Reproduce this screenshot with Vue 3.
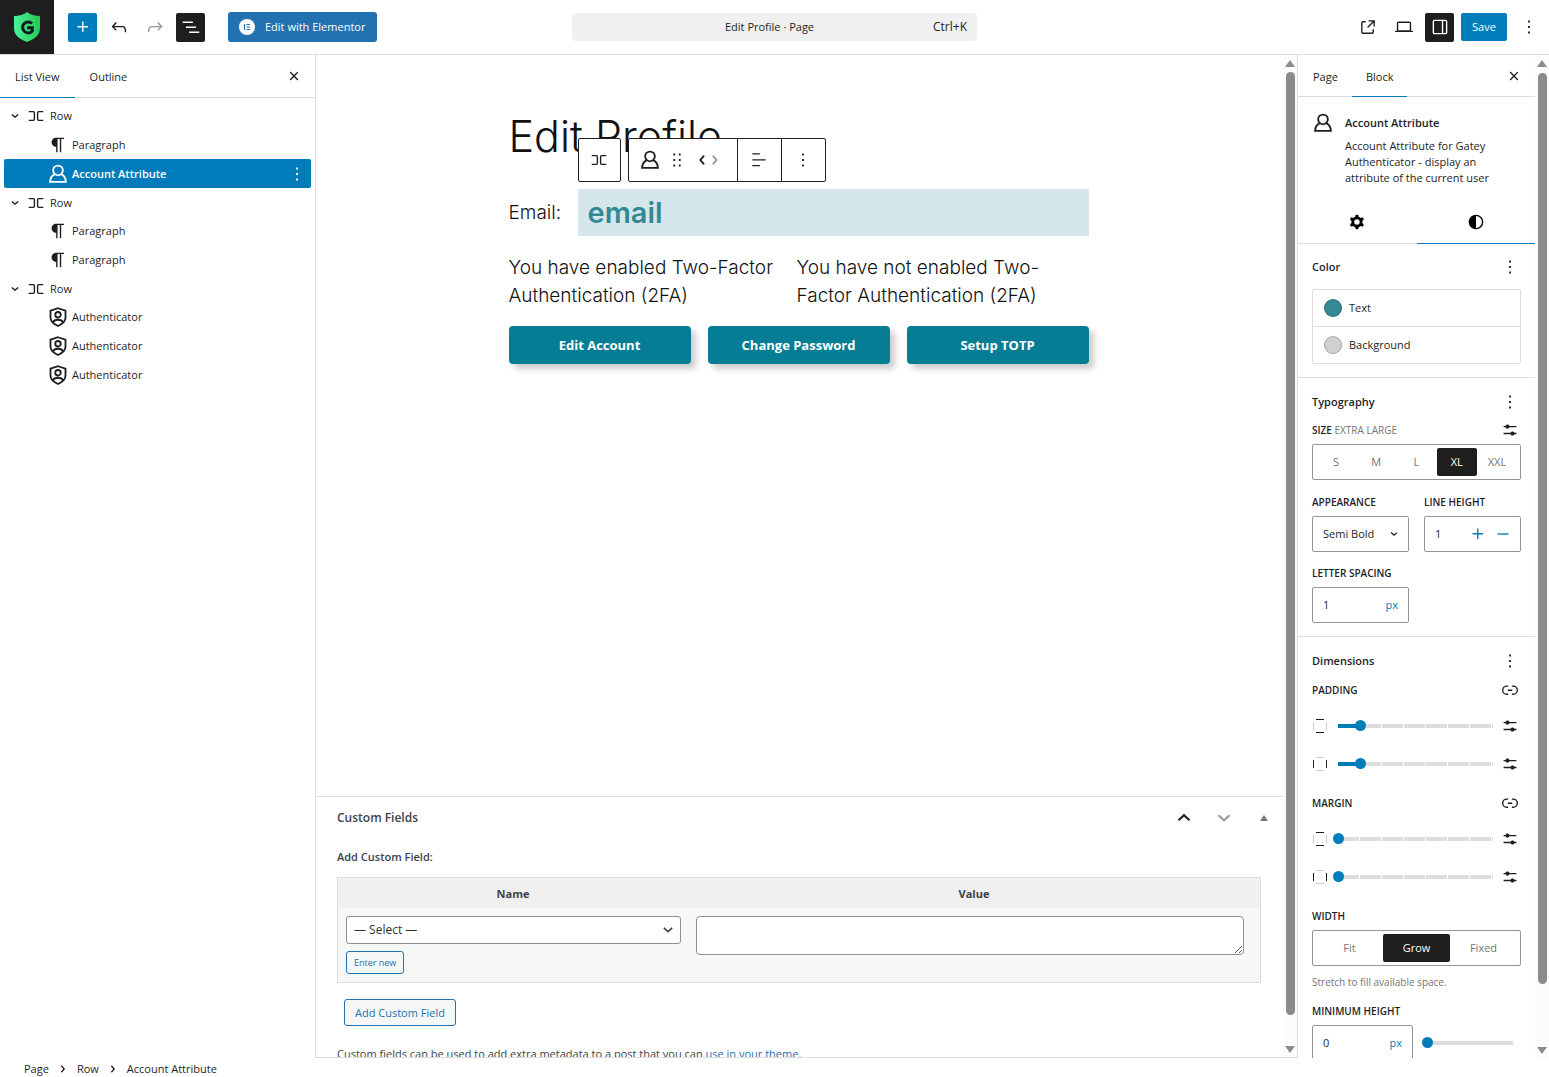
<script setup>
import { h, ref } from 'vue'

const paths = {
  plus: 'M11 12.5V17.5H12.5V12.5H17.5V11H12.5V6H11V11H6V12.5H11Z',
  undo: 'M18.3 11.7c-.6-.6-1.4-.9-2.3-.9H6.7l2.9-3.3-1.1-1-4.5 5L8.5 16l1-1-2.7-2.7H16c.5 0 .9.2 1.3.5 1 1 1 3.4 1 4.5v.3h1.5v-.2c0-1.5 0-4.3-1.5-5.7z',
  redo: 'M15.6 6.5l-1.1 1 2.9 3.3H8c-.9 0-1.7.3-2.3.9-1.4 1.5-1.4 4.2-1.4 5.6v.2h1.5v-.3c0-1.1 0-3.5 1-4.5.3-.3.7-.5 1.3-.5h9.2L14.5 15l1.1 1.1 4.6-4.6-4.6-5z',
  listView: 'M3 6h11v1.5H3V6Zm3.5 5.5h11V13h-11v-1.5ZM21 17H10v1.5h11V17Z',
  external: 'M19.5 4.5h-7V6h4.44l-5.97 5.97 1.06 1.06L18 7.06v4.44h1.5v-7Zm-13 1a2 2 0 0 0-2 2v10a2 2 0 0 0 2 2h10a2 2 0 0 0 2-2v-3H17v3a.5.5 0 0 1-.5.5h-10a.5.5 0 0 1-.5-.5v-10a.5.5 0 0 1 .5-.5h3V5.5h-3Z',
  desktop: 'M20.5 16h-.7V8c0-1.1-.9-2-2-2H6.2c-1.1 0-2 .9-2 2v8h-.7c-.8 0-1.5.7-1.5 1.5h20c0-.8-.7-1.5-1.5-1.5zM5.7 8c0-.3.2-.5.5-.5h11.6c.3 0 .5.2.5.5v7.6H5.7V8z',
  drawer: 'M18 4H6c-1.1 0-2 .9-2 2v12c0 1.1.9 2 2 2h12c1.1 0 2-.9 2-2V6c0-1.1-.9-2-2-2zm-4 14.500H6c-.3 0-.5-.2-.5-.5V6c0-.3.2-.5.5-.5h8v13zm4.500-.5c0 .3-.2.5-.5.5h-2.500v-13H18c.3 0 .5.2.5.5v12z',
  more: 'M13 19h-2v-2h2v2zm0-6h-2v-2h2v2zm0-6h-2V5h2v2z',
  close: 'M12 13.060l3.712 3.713 1.061-1.060L13.061 12l3.712-3.712-1.060-1.060L12 10.938 8.288 7.227l-1.061 1.060L10.939 12l-3.712 3.712 1.060 1.061L12 13.061z',
  chevron: 'm15.990 10.889-3.988 3.418-3.988-3.418.976-1.140 3.012 2.582 3.012-2.581.976 1.139Z',
  left: 'M13.100 16l-3.400-4 3.400-4 1.100 1-2.600 3 2.600 3-1.100 1z',
  right: 'M10.800 8l3.400 4-3.400 4-1.100-1 2.600-3-2.600-3 1.100-1z',
  row: 'M4 6.500h5a2 2 0 0 1 2 2v7a2 2 0 0 1-2 2H4V16h5a.5.5 0 0 0 .5-.5v-7A.5.5 0 0 0 9 8H4V6.500Zm16 0h-5a2 2 0 0 0-2 2v7a2 2 0 0 0 2 2h5V16h-5a.5.5 0 0 1-.5-.5v-7A.5.5 0 0 1 15 8h5V6.500Z',
  paragraph: 'm9.996 14v-.225h.004v6.225h1.500v-14.500h2.500v14.500h1.500v-14.500h3v-1.500h-8.504c-2.761 0-5 2.239-5 5 0 2.761 2.239 5 5 5z',
  sliders: 'm19 7.500h-7.628c-.309-.874-1.142-1.500-2.122-1.500-.980 0-1.813.626-2.122 1.500H5v1.500h2.128c.309.874 1.142 1.500 2.122 1.500.980 0 1.813-.626 2.122-1.500H19zm0 7.500h-2.128c-.309-.874-1.142-1.500-2.122-1.500s-1.813.626-2.122 1.500H5v1.500h7.628c.309.874 1.142 1.500 2.122 1.500s1.813-.626 2.122-1.500H19z',
  cog: 'M10.289 4.836A1 1 0 0111.275 4h1.306a1 1 0 01.987.836l.244 1.466c.787.26 1.503.679 2.108 1.218l1.393-.522a1 1 0 011.216.437l.653 1.130a1 1 0 01-.23 1.273l-1.148.944a6.025 6.025 0 010 2.435l1.149.946a1 1 0 01.23 1.272l-.653 1.130a1 1 0 01-1.216.437l-1.394-.522c-.605.54-1.320.958-2.108 1.218l-.244 1.466a1 1 0 01-.987.836h-1.306a1 1 0 01-.986-.836l-.244-1.466a5.995 5.995 0 01-2.108-1.218l-1.394.522a1 1 0 01-1.217-.436l-.653-1.131a1 1 0 01.23-1.272l1.149-.946a6.026 6.026 0 010-2.435l-1.148-.944a1 1 0 01-.23-1.272l.653-1.131a1 1 0 011.217-.437l1.393.522a5.994 5.994 0 012.108-1.218l.244-1.466zM14.929 12a3 3 0 11-6 0 3 3 0 016 0z',
  styles: 'M20 12a8 8 0 1 1-16 0 8 8 0 0 1 16 0Zm-1.500 0a6.500 6.500 0 0 1-6.500 6.500v-13a6.500 6.500 0 0 1 6.500 6.500Z',
  link: 'M10 17.389H8.444A5.194 5.194 0 1 1 8.444 7H10v1.500H8.444a3.694 3.694 0 0 0 0 7.389H10v1.500ZM14 7h1.556a5.194 5.194 0 0 1 0 10.390H14v-1.500h1.556a3.694 3.694 0 0 0 0-7.390H14V7Zm-4.500 6h5v-1.500h-5V13Z',
  drag: 'M8 7h2V5H8v2zm0 6h2v-2H8v2zm0 6h2v-2H8v2zm6-14v2h2V5h-2zm0 8h2v-2h-2v2zm0 6h2v-2h-2v2z',
  align: 'M13 5.500H4V4h9v1.500Zm7 7H4V11h16v1.500Zm-7 7H4V18h9v1.500Z',
  minus: 'M6 11.250h12v1.500H6z',
}
const outlines = {
  user: 'M8.500 12.200C6.800 11 6.200 9.300 6.200 7.700a5.800 5.800 0 0 1 11.600 0c0 1.600-.6 3.300-2.300 4.500M8.500 12.200c2 1.700 5 1.700 7 0M8.500 12.200C5 13.500 2.800 16.500 2.500 21.500h19c-.3-5-2.500-8-6-9.300',
  shield: 'M12 1.500 21 4.500V13c0 4.500-4 7.500-9 9.800C7 20.500 3 17.500 3 13V4.500ZM15.300 9.300a3.300 3.300 0 1 1-6.600 0 3.300 3.300 0 0 1 6.600 0ZM6 18.500c1-2.300 3.400-3.200 6-3.200s5 .9 6 3.200',
  up: 'M6.500 14.200 12 9.200l5.500 5',
  down: 'M6.500 9.300 12 14.300l5.500-5',
}
const Icon = ({ name, size = 22 }) =>
  h('svg', { width: size, height: size, viewBox: '0 0 24 24', 'aria-hidden': 'true', style: { flex: 'none', display: 'block' } }, [
    outlines[name]
      ? h('path', { d: outlines[name], fill: 'none', stroke: 'currentColor', 'stroke-width': 2.2 })
      : h('path', { d: paths[name], fill: 'currentColor', 'fill-rule': 'evenodd' }),
  ])
Icon.props = ['name', 'size']

const blocks = [
  { label: 'Row', icon: 'row', parent: true },
  { label: 'Paragraph', icon: 'paragraph' },
  { label: 'Account Attribute', icon: 'user', selected: true },
  { label: 'Row', icon: 'row', parent: true },
  { label: 'Paragraph', icon: 'paragraph' },
  { label: 'Paragraph', icon: 'paragraph' },
  { label: 'Row', icon: 'row', parent: true },
  { label: 'Authenticator', icon: 'shield' },
  { label: 'Authenticator', icon: 'shield' },
  { label: 'Authenticator', icon: 'shield' },
]
const sizes = ['S', 'M', 'L', 'XL', 'XXL']
const widths = ['Fit', 'Grow', 'Fixed']
const spacing = [
  { title: 'Padding', sides: [{ axis: 'vertical', value: 1 }, { axis: 'horizontal', value: 1 }] },
  { title: 'Margin', sides: [{ axis: 'vertical', value: 0 }, { axis: 'horizontal', value: 0 }] },
]
const size = ref('XL')
const width = ref('Grow')
</script>

<template>
  <div class="editor">
    <header class="topbar">
      <div class="top-left">
        <a href="#" class="site-logo" aria-label="Dashboard">
          <svg width="26" height="30" viewBox="0 0 26 30" aria-hidden="true">
            <defs>
              <linearGradient id="shieldFill" x1="0" x2="1"><stop offset="0" stop-color="#47f39b" /><stop offset="1" stop-color="#28c850" /></linearGradient>
            </defs>
            <path d="M13 0c3 2.500 8 4 13 4v12c0 7-5 11-13 14C5 27 0 23 0 16V4c5 0 10-1.500 13-4Z" fill="url(#shieldFill)" />
            <path d="M18 11.500a5.500 5.500 0 1 0 .3 7.500v-3.200H13" fill="none" stroke="#111b22" stroke-width="3" />
          </svg>
        </a>
        <div class="tools">
          <button class="tool primary" aria-label="Add block"><Icon name="plus" /></button>
          <button class="tool" aria-label="Undo"><Icon name="undo" /></button>
          <button class="tool faded" aria-label="Redo"><Icon name="redo" /></button>
          <button class="tool dark" aria-label="Document overview"><Icon name="listView" /></button>
        </div>
        <button class="elementor">
          <svg width="16" height="16" viewBox="0 0 16 16" aria-hidden="true">
            <circle cx="8" cy="8" r="8" fill="#fff" />
            <path d="M5.500 5v6M7.500 5.500H11M7.500 8H11M7.500 10.500H11" stroke="#2271b1" stroke-width="1.200" />
          </svg>
          Edit with Elementor
        </button>
      </div>
      <button class="command">
        <span class="doc">Edit Profile · Page</span>
        <span class="shortcut">Ctrl+K</span>
      </button>
      <div class="top-right">
        <button class="tool" aria-label="View page"><Icon name="external" /></button>
        <button class="tool" aria-label="Preview"><Icon name="desktop" /></button>
        <button class="tool dark" aria-label="Settings"><Icon name="drawer" /></button>
        <button class="save">Save</button>
        <button class="tool" aria-label="Options"><Icon name="more" /></button>
      </div>
    </header>

    <main class="body">
      <aside class="list-panel">
        <div class="tabs">
          <button class="tab active">List View</button>
          <button class="tab">Outline</button>
          <button class="tab-close" aria-label="Close"><Icon name="close" /></button>
        </div>
        <ul class="tree">
          <li v-for="(b, i) in blocks" :key="i" :class="{ child: !b.parent, selected: b.selected }">
            <Icon v-if="b.parent" name="chevron" />
            <a href="#"><Icon :name="b.icon" :size="b.icon === 'user' || b.icon === 'shield' ? 20 : 22" /><span>{{ b.label }}</span></a>
            <button v-if="b.selected" class="tool" aria-label="Options"><Icon name="more" /></button>
          </li>
        </ul>
      </aside>

      <section class="center">
        <div class="scroll-area">
          <div class="canvas">
            <div class="page">
              <h1>Edit Profile</h1>
              <div class="email-row">
                <p>Email:</p>
                <div class="attribute">email
                  <div class="block-toolbar">
                    <button class="parent-block" aria-label="Select parent block"><Icon name="row" /></button>
                    <div class="group">
                      <div class="segment movers">
                        <button aria-label="Account Attribute"><Icon name="user" :size="20" /></button>
                        <button aria-label="Drag"><Icon name="drag" /></button>
                        <span class="arrows">
                          <button aria-label="Move left"><Icon name="left" :size="30" /></button>
                          <button class="faded" aria-label="Move right"><Icon name="right" :size="30" /></button>
                        </span>
                      </div>
                      <div class="segment"><button aria-label="Align"><Icon name="align" :size="20" /></button></div>
                      <div class="segment"><button aria-label="Options"><Icon name="more" /></button></div>
                    </div>
                  </div>
                </div>
              </div>
              <div class="status">
                <p>You have enabled Two-Factor Authentication (2FA)</p>
                <p>You have not enabled Two-Factor Authentication (2FA)</p>
              </div>
              <div class="actions">
                <button>Edit Account</button>
                <button>Change Password</button>
                <button>Setup TOTP</button>
              </div>
            </div>
          </div>
          <div class="metabox">
            <div class="meta-head">
              <h2>Custom Fields</h2>
              <button aria-label="Move up"><Icon name="up" :size="24" /></button>
              <button class="faded" aria-label="Move down"><Icon name="down" :size="24" /></button>
              <button class="toggle" aria-label="Toggle panel"><svg width="8" height="6" viewBox="0 0 8 6"><path d="M4 0l4 6H0z" fill="#787c82" /></svg></button>
            </div>
            <p class="meta-title">Add Custom Field:</p>
            <table>
              <thead>
                <tr><th class="name-col"><label for="meta-key">Name</label></th><th><label for="meta-value">Value</label></th></tr>
              </thead>
              <tbody>
                <tr>
                  <td>
                    <div class="select-wrap">
                      <select id="meta-key"><option>— Select —</option></select>
                      <Icon name="down" :size="18" />
                    </div>
                    <button class="outline small">Enter new</button>
                  </td>
                  <td class="value-col"><textarea id="meta-value"></textarea></td>
                </tr>
              </tbody>
            </table>
            <button class="outline add">Add Custom Field</button>
            <p class="help">Custom fields can be used to add extra metadata to a post that you can <a href="#">use in your theme</a>.</p>
          </div>
        </div>
        <div class="scrollbar"><i class="arrow-up"></i><i class="thumb"></i><i class="arrow-down"></i></div>
      </section>

      <aside class="settings">
        <div class="settings-body">
          <div class="tabs">
            <button class="tab">Page</button>
            <button class="tab active">Block</button>
            <button class="tab-close" aria-label="Close"><Icon name="close" /></button>
          </div>
          <div class="card">
            <Icon name="user" :size="20" />
            <div>
              <h2>Account Attribute</h2>
              <p>Account Attribute for Gatey Authenticator - display an attribute of the current user</p>
            </div>
          </div>
          <div class="subtabs">
            <button aria-label="Settings"><Icon name="cog" /></button>
            <button class="active" aria-label="Styles"><Icon name="styles" /></button>
          </div>

          <section class="panel color">
            <div class="panel-head"><h3>Color</h3><button aria-label="Color options"><Icon name="more" /></button></div>
            <div class="swatches">
              <button><i class="dot teal"></i>Text</button>
              <button><i class="dot gray"></i>Background</button>
            </div>
          </section>

          <section class="panel typography">
            <div class="panel-head"><h3>Typography</h3><button aria-label="Typography options"><Icon name="more" /></button></div>
            <div class="label-row"><span class="label">Size <em>Extra Large</em></span><button aria-label="Set custom size"><Icon name="sliders" /></button></div>
            <div class="segmented five">
              <button v-for="s in sizes" :key="s" :class="{ on: s === size }" @click="size = s">{{ s }}</button>
            </div>
            <div class="fields">
              <div>
                <label class="label" for="appearance">Appearance</label>
                <div class="box">
                  <select id="appearance"><option>Semi Bold</option></select>
                  <Icon name="chevron" :size="20" />
                </div>
              </div>
              <div>
                <label class="label" for="line-height">Line height</label>
                <div class="box stepper">
                  <input id="line-height" type="text" value="1" />
                  <button aria-label="Increment"><Icon name="plus" /></button>
                  <button aria-label="Decrement"><Icon name="minus" /></button>
                </div>
              </div>
              <div>
                <label class="label" for="letter-spacing">Letter spacing</label>
                <div class="box"><input id="letter-spacing" type="text" value="1" /><span class="unit">px</span></div>
              </div>
            </div>
          </section>

          <section class="panel dimensions">
            <div class="panel-head"><h3>Dimensions</h3><button aria-label="Dimensions options"><Icon name="more" /></button></div>
            <div v-for="group in spacing" :key="group.title" class="spacing">
              <div class="label-row"><span class="label">{{ group.title }}</span><button aria-label="Unlink sides"><Icon name="link" /></button></div>
              <div v-for="side in group.sides" :key="side.axis" class="slider-row">
                <i :class="['sides', side.axis]"></i>
                <input class="steps" type="range" min="0" max="7" :value="side.value" :aria-label="group.title + ' ' + side.axis" :style="{ '--fill': (side.value / 7) * 100 + '%' }" />
                <button aria-label="Set custom size"><Icon name="sliders" /></button>
              </div>
            </div>
            <span class="label width-label">Width</span>
            <div class="segmented">
              <button v-for="w in widths" :key="w" :class="{ on: w === width }" @click="width = w">{{ w }}</button>
            </div>
            <p class="hint">Stretch to fill available space.</p>
            <label class="label" for="min-height">Minimum height</label>
            <div class="min-height">
              <div class="box"><input id="min-height" type="text" value="0" /><span class="unit">px</span></div>
              <input type="range" min="0" max="100" value="0" aria-label="Minimum height" />
            </div>
          </section>
        </div>
        <div class="scrollbar wide"><i class="arrow-up"></i><i class="thumb"></i><i class="arrow-down"></i></div>
      </aside>
    </main>

    <footer class="breadcrumb">
      <a href="#">Page</a><Icon name="right" /><a href="#">Row</a><Icon name="right" /><span>Account Attribute</span>
    </footer>
  </div>
</template>

<style>
body { margin: 0; background: #fff; }
</style>

<style scoped>
* { box-sizing: border-box; }
.editor {
  height: 100vh;
  display: flex;
  flex-direction: column;
  overflow: hidden;
  color: #1e1e1e;
  font: 11px/16px "Open Sans", "Noto Sans", sans-serif;
}
button, input, select, textarea { font: inherit; color: inherit; margin: 0; padding: 0; border: 0; background: none; }
button { display: inline-flex; align-items: center; justify-content: center; cursor: pointer; }
h1, h2, h3, p, ul { margin: 0; padding: 0; }
ul { list-style: none; }
a { color: inherit; text-decoration: none; }
.faded { opacity: .45; }

.topbar { flex: none; height: 55px; display: grid; grid-template-columns: 1fr 405px 1fr; align-items: center; border-bottom: 1px solid #ddd; }
.top-left, .top-right, .tools { display: flex; align-items: center; }
.site-logo { width: 54px; height: 54px; background: #1e1e1e; display: flex; align-items: center; justify-content: center; }
.tools { gap: 7px; margin: 0 23px 0 14px; }
.tool { width: 29px; height: 29px; border-radius: 2px; }
.primary, .save { background: #007cba; color: #fff; }
.dark { background: #1e1e1e; color: #fff; }
.elementor { height: 30px; padding: 0 12px 0 11px; gap: 10px; background: #2271b1; color: #fff; border-radius: 3px; }
.command { height: 28px; padding: 0 10px; background: #f0f0f0; border-radius: 4px; }
.doc { flex: 1; padding-left: 24px; }
.shortcut { font-size: 12px; }
.top-right { justify-content: flex-end; gap: 7px; padding-right: 6px; }
.save { width: 46px; height: 28px; border-radius: 2px; }

.body { flex: 1; min-height: 0; display: grid; grid-template-columns: 316px minmax(0, 1fr) 252px; }
.tabs { height: 43px; display: flex; border-bottom: 1px solid #ddd; }
.tab { padding: 2px 15px 0; margin-bottom: -1px; border-bottom: 1px solid transparent; }
.tab.active { border-color: #007cba; }
.tab-close { width: 29px; margin: 0 7px 0 auto; }

.list-panel { border-right: 1px solid #ddd; }
.tree { height: 287px; margin: 4px 4px 0; display: grid; grid-template-rows: repeat(10, 1fr); }
.tree li { display: flex; align-items: center; border-radius: 2px; }
.tree li > svg { margin-right: -1px; }
.tree a { display: flex; align-items: center; gap: 3px; flex: 1; }
.tree li.child { padding-left: 43px; }
.tree li.child a > svg { width: 22px; }
.tree .selected { background: #007cba; color: #fff; font-weight: 600; }

.center { display: flex; min-height: 0; border-bottom: 1px solid #ddd; }
.scroll-area { flex: 1; min-width: 0; overflow: hidden; }
.canvas { min-height: 741px; padding: 54px 2px 0 0; color: #111; font-family: Inter, sans-serif; font-weight: 300; }
.page { width: 580px; margin: 0 auto; }
h1 { font-size: 43px; line-height: 54px; font-weight: 300; }
.email-row { display: flex; align-items: center; gap: 17px; margin-top: 26px; font-size: 19px; line-height: 28px; }
.email-row p { width: 52px; }
.attribute { position: relative; flex: 1; height: 47px; padding: 0 10px; background: #d5e7ea; color: #358995; font-size: 29px; line-height: 48px; font-weight: 600; }
.block-toolbar { position: absolute; left: 0; bottom: 54px; display: flex; gap: 7px; color: #1e1e1e; }
.parent-block, .group { height: 44px; background: #fff; border: 1px solid #1e1e1e; border-radius: 2px; }
.parent-block { width: 43px; }
.group { display: flex; }
.segment { display: flex; justify-content: center; width: 44px; }
.segment + .segment { border-left: 1px solid #1e1e1e; }
.movers { width: 108px; gap: 6px; padding-right: 4px; }
.arrows { display: flex; padding-left: 2px; }
.arrows button { width: 13px; justify-content: center; }
.status { display: grid; grid-template-columns: 271px 1fr; gap: 17px; margin-top: 18px; font-size: 19px; line-height: 28px; }
.actions { display: grid; grid-template-columns: repeat(3, 1fr); gap: 17px; margin-top: 16px; }
.actions button { height: 38px; border-radius: 4px; background: #057d95; color: #fff; font: 700 13px/16px "Open Sans", sans-serif; box-shadow: 5px 5px 6px rgba(0, 0, 0, .2); }

.metabox { border-top: 1px solid #ddd; padding: 0 22px 0 21px; color: #3c434a; }
.meta-head { display: flex; align-items: center; height: 41px; }
.meta-head h2 { flex: 1; font-size: 12px; font-weight: 600; }
.meta-head button { width: 40px; color: #1d2327; }
.meta-head .toggle { margin-right: -23px; }
.meta-title { font-weight: 600; margin: 11px 0 12px; }
table { width: 100%; border: 1px solid #ddd; border-spacing: 0; background: #f6f7f7; table-layout: fixed; }
th { height: 30px; padding: 2px 0 0; background: #f0f0f0; font-weight: 700; }
.name-col { width: 350px; }
td { padding: 8px; vertical-align: top; line-height: 16px; }
td:first-child { padding-right: 7px; }
.select-wrap { position: relative; }
.select-wrap select { width: 100%; height: 28px; padding: 0 7px; appearance: none; background: #fff; border: 1px solid #8c8f94; border-radius: 3px; color: #2c3338; display: block; font-size: 12px; }
.select-wrap svg { position: absolute; right: 4px; top: 5px; pointer-events: none; }
.outline { border: 1px solid #2271b1; border-radius: 3px; background: #f6f7f7; color: #2271b1; }
.small { margin-top: 7px; height: 23px; padding: 0 7px; font-size: 9px; }
.value-col { padding-right: 16px; }
textarea { display: block; width: 100%; height: 39px; background: #fff; border: 1px solid #8c8f94; border-radius: 4px; resize: vertical; }
.add { height: 27px; margin: 16px 7px 20px; padding: 0 10px; }
.help a { color: #2271b1; text-decoration: underline; }

.scrollbar { flex: none; width: 14px; background: #fcfcfc; display: flex; flex-direction: column; align-items: center; padding: 5px 0 4px; }
.scrollbar i { display: block; }
.thumb { flex: 1; width: 9px; margin: 5px 0 31px; border-radius: 5px; background: #8b8b8b; }
.arrow-up, .arrow-down { border: 5px solid transparent; }
.arrow-up { border-top: 0; border-bottom: 7px solid #8b8b8b; }
.arrow-down { border-bottom: 0; border-top: 7px solid #8b8b8b; }
.wide .thumb { margin: 6px 0 63px; }

.settings { display: flex; min-height: 0; border-left: 1px solid #ddd; }
.settings-body { flex: 1; min-width: 0; overflow: hidden; }
.settings .tabs { height: 42px; }
.settings .tab { padding: 2px 14px 0; }
.settings .tab:first-child { padding-left: 15px; }
.card { display: flex; gap: 12px; padding: 16px 34px 0 15px; }
.card > div { padding-top: 2px; }
h2, h3 { font-size: 11px; line-height: 16px; font-weight: 600; }
.card h2 { margin-bottom: 7px; }
.subtabs { display: grid; grid-template-columns: 1fr 1fr; height: 43px; margin-top: 15px; border-bottom: 1px solid #ddd; }
.subtabs button { margin-bottom: -1px; border-bottom: 1px solid transparent; color: #000; }
.subtabs .active { border-color: #007cba; }
.panel { padding: 12px 14px 13px; border-bottom: 1px solid #ddd; }
.panel-head, .label-row { display: flex; justify-content: space-between; align-items: center; height: 22px; }
.swatches { margin-top: 11px; border: 1px solid #ddd; border-radius: 2px; }
.swatches button { display: flex; justify-content: flex-start; width: 100%; height: 36px; padding-left: 11px; gap: 7px; }
.swatches button + button { height: 37px; border-top: 1px solid #ddd; }
.dot { width: 18px; height: 18px; border-radius: 50%; border: 1px solid rgba(0, 0, 0, .2); }
.teal { background: #358995; }
.gray { background: #d0d0d0; }
.label { display: block; font-size: 10px; font-weight: 600; text-transform: uppercase; }
.label em { font-style: normal; font-weight: 400; color: #757575; }
.typography, .dimensions { padding-top: 13px; }
.typography .label-row { margin: 6px 0 3px; }
.segmented { display: grid; grid-template-columns: repeat(3, 1fr); height: 36px; padding: 3px; border: 1px solid #949494; border-radius: 2px; }
.five { grid-template-columns: repeat(5, 1fr); }
.segmented button { border-radius: 2px; color: #757575; }
.segmented .on { background: #1e1e1e; color: #fff; }
.fields { display: grid; grid-template-columns: repeat(2, minmax(0, 1fr)); gap: 13px 15px; margin-top: 14px; }
.box { display: flex; align-items: center; height: 36px; margin-top: 6px; padding: 0 10px; border: 1px solid #949494; border-radius: 2px; }
.box input, .box select { flex: 1; width: 0; min-width: 0; appearance: none; }
.box > svg { margin-right: -6px; }
.box button { color: #007cba; width: 25px; }
.stepper { padding-right: 5px; }
.unit { color: #007cba; }
.dimensions { border: 0; }
.spacing { margin-bottom: 9px; }
.spacing .label-row { margin: 7px 0 6px; }
.width-label { margin-top: 12px; }
.slider-row { display: flex; align-items: center; height: 38px; }
.sides {
  --v: #ccc;
  --h: #ccc;
  width: 14px;
  height: 14px;
  margin-left: 1px;
  background:
    linear-gradient(var(--v), var(--v)) top / 8px 1px no-repeat,
    linear-gradient(var(--v), var(--v)) bottom / 8px 1px no-repeat,
    linear-gradient(var(--h), var(--h)) left / 1px 8px no-repeat,
    linear-gradient(var(--h), var(--h)) right / 1px 8px no-repeat;
}
.vertical { --v: #1e1e1e; }
.horizontal { --h: #1e1e1e; }
.steps { margin: 0 1px 0 6px; }
input[type="range"] { flex: 1; min-width: 0; height: 12px; appearance: none; }
input[type="range"]::-webkit-slider-runnable-track { height: 4px; background: linear-gradient(#ddd, #ddd) center / calc(100% - 10px) 100% no-repeat; }
input.steps::-webkit-slider-runnable-track {
  background:
    repeating-linear-gradient(to right, transparent 0 21px, #fff 21px 22px) center / calc(100% - 10px) 100% no-repeat,
    linear-gradient(to right, #007cba var(--fill), #ddd var(--fill)) center / calc(100% - 10px) 100% no-repeat;
}
input[type="range"]::-webkit-slider-thumb { appearance: none; width: 11px; height: 11px; margin-top: -4px; border-radius: 50%; background: #007cba; }
.dimensions .segmented { margin-top: 6px; }
.hint { margin: 8px 0 13px; color: #757575; font-size: 10px; }
.min-height { display: flex; align-items: center; gap: 9px; margin-top: 6px; }
.min-height .box { width: 101px; margin-top: 0; }
.min-height > input { margin-right: 3px; }

.breadcrumb { flex: none; height: 19px; padding: 3px 24px 0; display: flex; align-items: center; gap: 3px; }
</style>
